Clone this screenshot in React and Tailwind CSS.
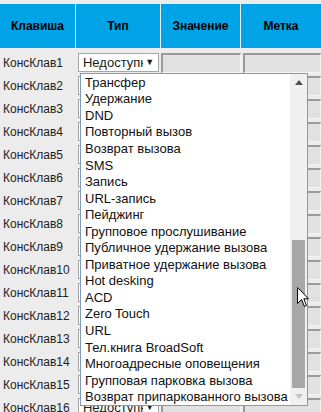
const options = [
  'Трансфер',
  'Удержание',
  'DND',
  'Повторный вызов',
  'Возврат вызова',
  'SMS',
  'Запись',
  'URL-запись',
  'Пейджинг',
  'Групповое прослушивание',
  'Публичное удержание вызова',
  'Приватное удержание вызова',
  'Hot desking',
  'ACD',
  'Zero Touch',
  'URL',
  'Тел.книга BroadSoft',
  'Многоадресные оповещения',
  'Групповая парковка вызова',
  'Возврат припаркованного вызова',
];

const rows = Array.from({ length: 16 }, (_, i) => `КонсКлав${i + 1}`);

function Cursor() {
  return (
    <svg width="13" height="21" viewBox="0 0 13 21" className="absolute left-[297px] top-[287px]">
      <path d="M0.5 0.5 L0.5 16.5 L4.5 12.5 L7.5 19.5 L9.5 18.5 L6.8 11.8 L11.5 11.8 Z" fill="#fff" stroke="#000" strokeWidth="1" />
    </svg>
  );
}

export default function App() {
  return (
    <div className="relative w-[321px] h-[412px] overflow-hidden bg-[#ececec] text-[#1a1a1a]" style={{ fontFamily: '"Liberation Sans", Arial, sans-serif' }}>
      {/* Header */}
      <div className="pt-[4px] flex gap-px bg-[#ececec]">
        {['Клавиша', 'Тип', 'Значение', 'Метка'].map((h, i) => (
          <div
            key={h}
            className={`h-[44px] flex items-center justify-center bg-[#00a3e6] text-[12px] font-bold text-black ${
              ['w-[75px]', 'w-[84px]', 'w-[79px]', 'flex-1'][i]
            }`}
          >
            {h}
          </div>
        ))}
      </div>

      {/* Rows */}
      <div className="pt-[3px]">
        {rows.map(r => (
          <div key={r} className="h-[23px] flex items-center">
            <div className="w-[80px] pl-[3px] text-[12px] text-[#1e1e1e] whitespace-nowrap">{r}</div>
            <div className="w-[83px] h-[19px] bg-white border border-[#a6a6a6] flex items-center pl-[4px] pr-[4px] text-[13px] overflow-hidden">
              <span className="w-[60px] overflow-hidden whitespace-nowrap">Недоступн</span>
              <span className="ml-auto text-[9px] leading-none">▼</span>
            </div>
            <div className="ml-[2px] w-[82px] h-[20px] bg-[#e1e1e1] border-t-2 border-l-2 border-[#9a9a9a] border-r border-b border-r-[#f4f4f4] border-b-[#f4f4f4]" />
            <div className="ml-[2px] w-[80px] h-[20px] bg-[#e1e1e1] border-t-2 border-l-2 border-[#9a9a9a] border-r border-b border-r-[#f4f4f4] border-b-[#f4f4f4]" />
          </div>
        ))}
      </div>

      {/* Open dropdown list */}
      <div className="absolute left-[80px] top-[73px] w-[228px] h-[333px] bg-white border border-[#7f9db9] flex">
        <div className="flex-1 overflow-hidden">
          {options.map(o => (
            <div key={o} className="h-[16.55px] flex items-center pl-[4px] text-[13px] leading-none whitespace-nowrap text-[#111]">
              {o}
            </div>
          ))}
        </div>
        <div className="w-[17px] bg-[#f0f0f0] flex flex-col items-center">
          <div className="h-[17px] flex items-center justify-center">
            <svg width="8" height="5" viewBox="0 0 8 5"><path d="M0 5 L4 0 L8 5 Z" fill="#505050" /></svg>
          </div>
          <div className="flex-1 w-full flex flex-col px-[2px]">
            <div className="h-[149px] shrink-0" />
            <div className="flex-1 bg-[#a8a8a8]" />
          </div>
          <div className="h-[17px] flex items-center justify-center">
            <svg width="8" height="5" viewBox="0 0 8 5"><path d="M0 0 L4 5 L8 0 Z" fill="#c2c2c2" /></svg>
          </div>
        </div>
      </div>

      <Cursor />
    </div>
  );
}
